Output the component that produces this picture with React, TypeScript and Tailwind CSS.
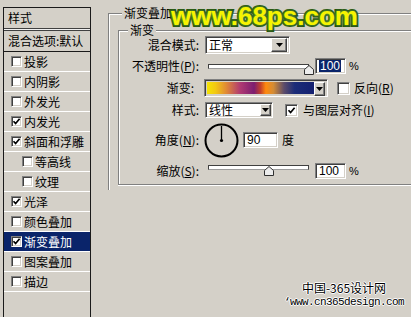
import React from "react"

const sunken =
  "border border-t-[#808080] border-l-[#808080] border-r-white border-b-white shadow-[inset_1px_1px_0_#404040,inset_-1px_-1px_0_#d4d0c8]"
const raised =
  "border border-t-white border-l-white border-r-[#404040] border-b-[#404040] shadow-[inset_-1px_-1px_0_#808080]"

const layers = [
  { name: "投影" },
  { name: "内阴影" },
  { name: "外发光" },
  { name: "内发光", checked: true },
  { name: "斜面和浮雕", checked: true },
  { name: "等高线", indent: true },
  { name: "纹理", indent: true },
  { name: "光泽", checked: true },
  { name: "颜色叠加" },
  { name: "渐变叠加", checked: true, active: true },
  { name: "图案叠加" },
  { name: "描边" },
]

function Check({ checked, className = "" }: { checked?: boolean; className?: string }) {
  return (
    <span className={`flex flex-none items-center justify-center bg-white ${sunken} ${className}`}>
      {checked && (
        <svg width="9" height="9" viewBox="0 0 9 9">
          <path d="M1.5 4.2 L3.6 6.5 L7.6 1.8" stroke="#000" strokeWidth="1.7" fill="none" />
        </svg>
      )}
    </span>
  )
}

function DropBtn({ className = "" }: { className?: string }) {
  return (
    <span className={`flex flex-none items-center justify-center bg-[#d4d0c8] ${raised} ${className}`}>
      <svg width="7" height="4" viewBox="0 0 7 4">
        <path d="M0 0h7L3.5 4z" fill="#000" />
      </svg>
    </span>
  )
}

function Slider({ value, track, thumb }: { value: number; track: string; thumb: string }) {
  // track runs from x=3 to x=103 of the 108px box
  const left = 3 + value * 100 - 4.5
  return (
    <div className="relative h-[16px] w-[108px] flex-none">
      <div className={`absolute left-[3px] h-[5px] w-[101px] border border-[#404040] border-b-[#9a9a9a] bg-white ${track}`} />
      <svg className={`absolute ${thumb}`} style={{ left }} width="10" height="10" viewBox="0 0 10 10">
        <path d="M0.5 4.5 L5 0.5 L9.5 4.5 L9.5 9.5 L0.5 9.5 Z" fill="#ececec" stroke="#303030" />
      </svg>
    </div>
  )
}

function NumBox({ value, selected, className = "" }: { value: string; selected?: boolean; className?: string }) {
  return (
    <div className={`flex h-[16px] flex-none items-center bg-white pl-[3px] font-['Liberation_Sans',sans-serif] text-[12px] ${sunken} ${className}`}>
      <span className={selected ? "bg-[#0a246a] px-[1px] text-white" : ""}>{value}</span>
    </div>
  )
}

function Label({ children, className = "" }: { children: React.ReactNode; className?: string }) {
  return <div className={`w-[80px] flex-none text-right ${className}`}>{children}</div>
}

export default function App() {
  return (
    <div className="relative flex h-[317px] w-[411px] overflow-hidden bg-[#d4d0c8] font-['Noto_Sans_CJK_SC',sans-serif] text-[12px] leading-none text-black">
      {/* styles list */}
      <div className="ml-[3px] mt-[7px] flex w-[88px] flex-none flex-col border-x border-t border-[#1a1a1a]">
        <div className="flex h-[20px] items-center pl-[4px]">样式</div>
        <div className="h-[3px] border-y border-[#404040] bg-[#f0f0f0]" />
        <div className="flex h-[21px] items-center border-b border-[#1a1a1a] pl-[4px]">混合选项:默认</div>
        {layers.map((l) => (
          <div
            key={l.name}
            className={`flex h-[20px] items-center gap-[2px] border-b border-white ${l.indent ? "pl-[18px]" : "pl-[7px]"} ${l.active ? "bg-[#0a246a] text-white" : ""}`}
          >
            <Check checked={l.checked} className="h-[11px] w-[11px]" />
            <span>{l.name}</span>
          </div>
        ))}
      </div>

      {/* settings */}
      <div className="flex flex-1 flex-col">
        <div className="relative ml-[17px] mt-[13px] h-[177px] w-[330px] border-l border-t border-[#808080] shadow-[inset_1px_1px_0_#fff]">
          <span className="absolute left-[13px] top-[-7px] bg-[#d4d0c8] px-[2px]">渐变叠加</span>
          <div className="relative ml-[9px] mt-[16px] h-[155px] w-[320px] border-y border-l border-[#808080] pt-[5px] shadow-[inset_1px_1px_0_#fff,0_1px_0_#fff]">
            <span className="absolute left-[9px] top-[-7px] bg-[#d4d0c8] px-[2px]">渐变</span>

            <div className="flex h-[18px] items-center">
              <Label>混合模式:</Label>
              <div className={`ml-[6px] flex h-[18px] w-[85px] items-center justify-between bg-white pl-[3px] pr-[2px] ${sunken}`}>
                <span>正常</span>
                <DropBtn className="h-[14px] w-[16px]" />
              </div>
            </div>

            <div className="mt-[4px] flex h-[16px] items-center">
              <Label>不透明性(<u>P</u>):</Label>
              <div className="ml-[6px] flex items-center">
                <Slider value={1} track="top-[6px]" thumb="top-[7px]" />
                <NumBox value="100" selected className="ml-[2px] w-[31px]" />
                <span className="ml-[3px] font-['Liberation_Sans',sans-serif] text-[11px]">%</span>
              </div>
            </div>

            <div className="mt-[5px] flex h-[18px] items-center">
              <Label className="pr-[5px]">渐变:</Label>
              <div className="ml-[5px] flex items-center">
                <div className={`flex h-[18px] w-[124px] ${sunken} p-[2px]`}>
                  <div className="flex-1 bg-[linear-gradient(to_right,#f4e404_0%,#f2c812_8%,#e08a34_18%,#b03a72_31%,#7c1e70_44%,#c2402c_50%,#ff8a0e_55%,#d48c34_62%,#5c4c6a_72%,#1c2c78_82%,#142070_100%)]" />
                  <DropBtn className="h-[14px] w-[11px]" />
                </div>
                <Check className="ml-[9px] h-[13px] w-[13px]" />
                <span className="ml-[4px]">反向(<u>R</u>)</span>
              </div>
            </div>

            <div className="mt-[5px] flex h-[16px] items-center">
              <Label>样式:</Label>
              <div className="ml-[6px] flex items-center">
                <div className={`flex h-[16px] w-[68px] items-center justify-between bg-white pl-[3px] pr-[1px] ${sunken}`}>
                  <span>线性</span>
                  <DropBtn className="h-[12px] w-[11px]" />
                </div>
                <Check checked className="ml-[12px] h-[13px] w-[13px]" />
                <span className="ml-[5px]">与图层对齐(<u>I</u>)</span>
              </div>
            </div>

            <div className="mt-[5px] flex h-[34px] items-center">
              <Label>角度(<u>N</u>):</Label>
              <div className="ml-[5px] flex items-center">
                <svg width="35" height="35" viewBox="0 0 35 35">
                  <circle cx="17.5" cy="17.5" r="16" stroke="#000" strokeWidth="2" fill="none" />
                  <path d="M17.5 17.5 V3" stroke="#000" strokeWidth="1.3" />
                  <circle cx="17.5" cy="17.5" r="1.6" fill="#000" />
                </svg>
                <NumBox value="90" className="ml-[4px] w-[35px]" />
                <span className="ml-[4px]">度</span>
              </div>
            </div>

            <div className="mt-[6px] flex h-[16px] items-center">
              <Label>缩放(<u>S</u>):</Label>
              <div className="ml-[6px] flex items-center">
                <Slider value={0.6} track="top-[2px]" thumb="top-[3px]" />
                <NumBox value="100" className="ml-[2px] w-[31px]" />
                <span className="ml-[3px] font-['Liberation_Sans',sans-serif] text-[11px]">%</span>
              </div>
            </div>
          </div>
        </div>
      </div>

      {/* watermarks */}
      <div className="absolute left-[171px] top-[3px] font-['Liberation_Sans',sans-serif] text-[26px] font-bold leading-none tracking-[0px] text-[#f6f400] [-webkit-text-stroke:4px_#22500f] [paint-order:stroke_fill] [text-shadow:0_0_3px_#8cc24a]">
        www.68ps.com
      </div>
      <div className="absolute left-[283px] top-[282px] flex w-[122px] flex-col items-center [text-shadow:1px_0_#fff,-1px_0_#fff,0_1px_#fff,0_-1px_#fff]">
        <span className="text-[12px]">中国-365设计网</span>
        <span className="mt-[3px] font-['Liberation_Mono',monospace] text-[11px] tracking-[-0.6px]">‘www.cn365design.com</span>
      </div>
    </div>
  )
}
